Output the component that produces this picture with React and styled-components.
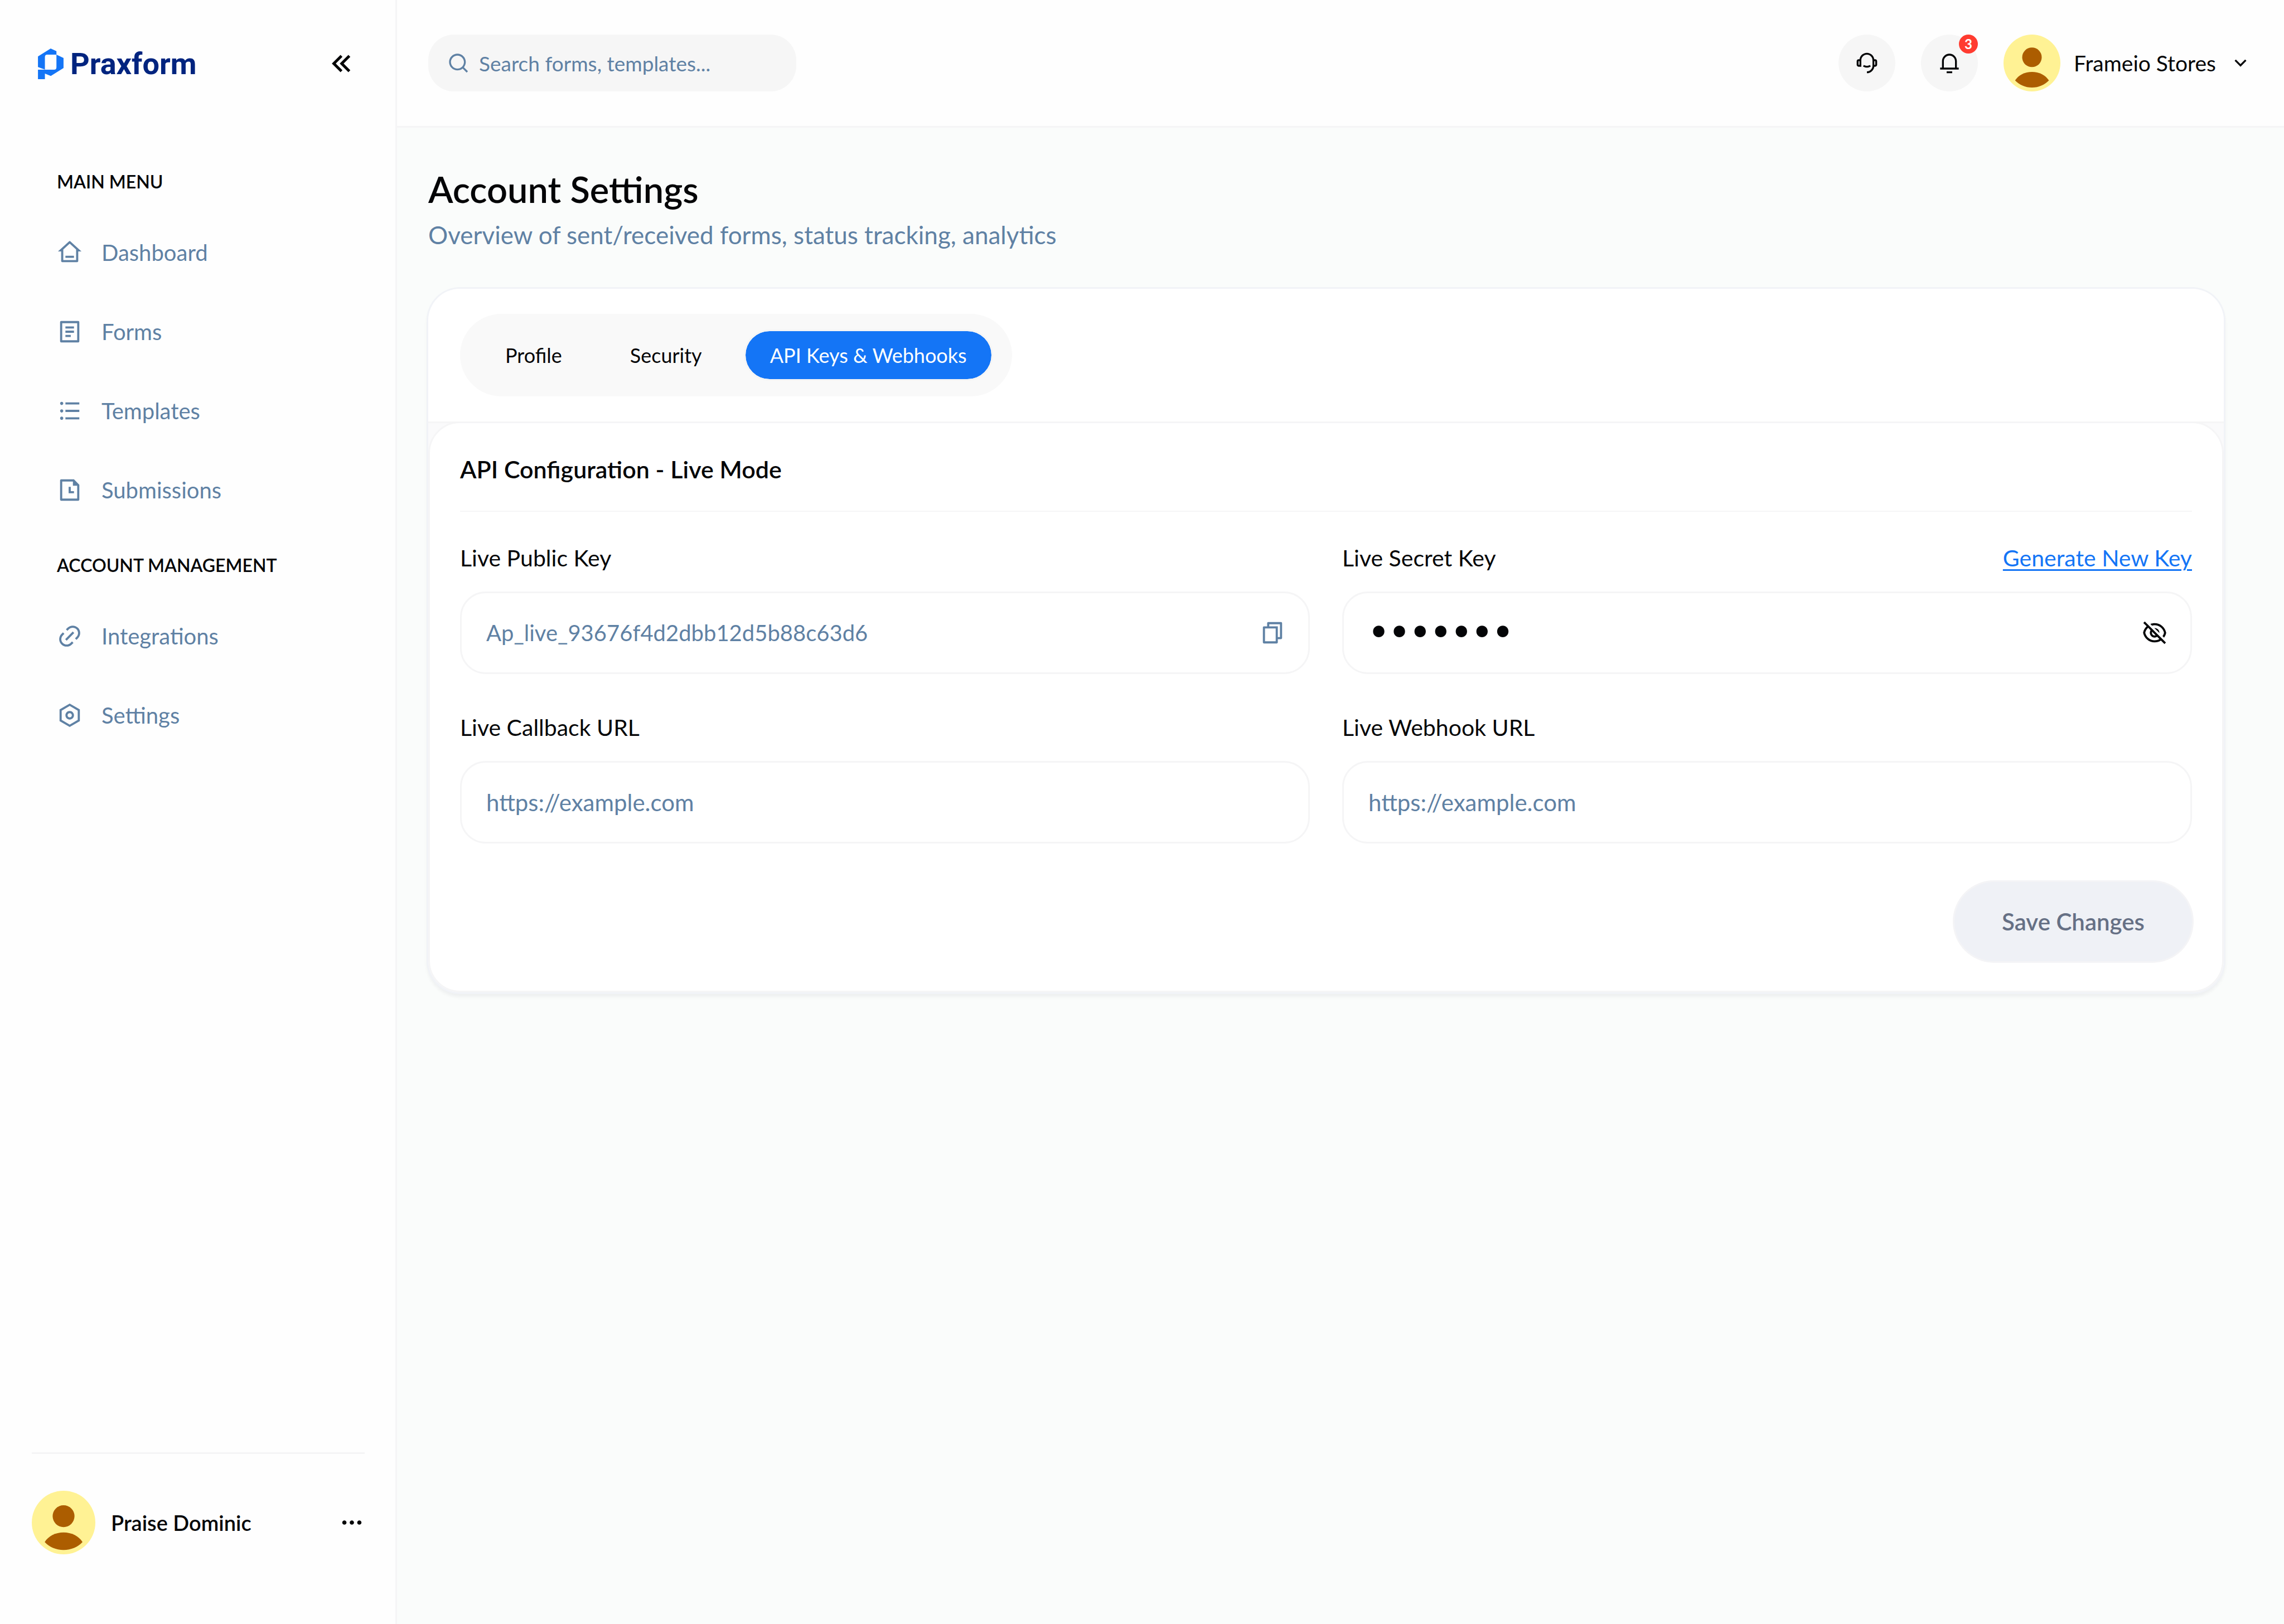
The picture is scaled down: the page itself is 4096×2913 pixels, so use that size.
import React, { useState } from "react";
import styled, { createGlobalStyle } from "styled-components";
import {
  RiArrowDownSLine,
  RiArrowLeftDoubleLine,
  RiCustomerService2Line,
  RiEyeOffLine,
  RiFileCopyLine,
  RiFileHistoryLine,
  RiHome3Line,
  RiLink,
  RiListUnordered,
  RiMoreFill,
  RiNotification3Line,
  RiSearchLine,
  RiSettingsLine,
} from "react-icons/ri";

const color = {
  ink: "#040507",
  steel: "#5f81a4",
  blue: "#1475f6",
  navy: "#00247f",
  line: "#f5f5f6",
  page: "#fafcfb",
};

const GlobalStyle = createGlobalStyle`
  *, *::before, *::after { box-sizing: border-box; }
  body {
    margin: 0;
    background: ${color.page};
    color: ${color.ink};
    font-family: Lato, "Open Sans", sans-serif;
    font-size: 40px;
  }
  button, input { font: inherit; color: inherit; }
  button { border: 0; padding: 0; background: none; cursor: pointer; }
  h1, h2, h3, p, ul { margin: 0; padding: 0; }
  a { color: inherit; text-decoration: none; }
  svg { display: block; flex: none; }
`;

const Shell = styled.div`
  display: flex;
  min-height: 100vh;
`;

/* Sidebar */

const Sidebar = styled.aside`
  display: flex;
  flex-direction: column;
  flex: none;
  width: 712px;
  background: #fefefe;
  border-right: 3px solid ${color.line};
`;

const BrandRow = styled.div`
  display: flex;
  align-items: center;
  justify-content: space-between;
  height: 228px;
  padding: 0 66px 0 68px;
`;

const Brand = styled.a`
  display: flex;
  align-items: center;
  gap: 12px;
  color: ${color.navy};
  font-family: Roboto, sans-serif;
  font-size: 54px;
  font-weight: 700;
`;

const IconButton = styled.button`
  display: grid;
  place-items: center;
  flex: none;
`;

const Nav = styled.nav`
  flex: 1;
  padding: 34px 57px 0 102px;
`;

const NavHeading = styled.h2`
  padding: 42px 0 34px;
  font-size: 32px;
  line-height: 44px;
  font-weight: 600;
`;

const NavList = styled.ul`
  list-style: none;
`;

const NavLink = styled.a`
  display: flex;
  align-items: center;
  gap: 34px;
  height: 142px;
  color: ${color.steel};
`;

const Account = styled.div`
  display: flex;
  align-items: center;
  gap: 28px;
  margin: 0 55px 0 57px;
  padding: 66px 0 125px;
  border-top: 3px solid ${color.line};
`;

const AccountName = styled.span`
  flex: 1;
  font-size: 38px;
  font-weight: 600;
`;

/* Top bar */

const Column = styled.div`
  display: flex;
  flex-direction: column;
  flex: 1;
  min-width: 0;
`;

const TopBar = styled.header`
  display: flex;
  align-items: center;
  justify-content: space-between;
  height: 229px;
  padding: 0 58px 0 56px;
  background: #fefefe;
  border-bottom: 3px solid ${color.line};
`;

const SearchBox = styled.label`
  display: flex;
  align-items: center;
  gap: 17px;
  width: 660px;
  height: 102px;
  padding: 0 34px;
  border-radius: 46px;
  background: #f6f6f6;
  color: ${color.steel};
  font-size: 37px;
`;

const TextInput = styled.input`
  flex: 1;
  min-width: 0;
  height: 100%;
  padding: 0;
  border: 0;
  outline: 0;
  background: none;
  &::placeholder { color: ${color.steel}; opacity: 1; }
`;

const Actions = styled.div`
  display: flex;
  align-items: center;
  gap: 46px;
`;

const RoundButton = styled(IconButton)`
  position: relative;
  width: 102px;
  height: 102px;
  border-radius: 50%;
  background: #f6f6f6;
`;

const Badge = styled.span`
  position: absolute;
  top: 0;
  right: 0;
  width: 34px;
  height: 34px;
  border-radius: 50%;
  background: #ff3b30;
  color: #fff;
  font-size: 24px;
  line-height: 34px;
  font-weight: 700;
  text-align: center;
`;

const StoreButton = styled.button`
  display: flex;
  align-items: center;
  gap: 24px;
  font-size: 39px;
`;

/* Page */

const Page = styled.main`
  flex: 1;
  padding: 70px 108px 70px 56px;
`;

const Title = styled.h1`
  font-size: 65px;
  line-height: 80px;
  font-weight: 600;
`;

const Subtitle = styled.p`
  margin-top: 12px;
  color: ${color.steel};
  font-size: 44px;
  line-height: 60px;
`;

const Card = styled.section`
  margin-top: 67px;
  border-radius: 57px;
  overflow: hidden;
  background: #fafafb;
  box-shadow: 0 0 0 3px #f1f3f7, 0 6px 6px 2px rgba(16, 24, 40, 0.05);
`;

const CardHeader = styled.div`
  padding: 45px 57px;
  background: #fff;
  border-bottom: 3px solid ${color.line};
`;

const Tabs = styled.div`
  display: inline-flex;
  align-items: center;
  gap: 28px;
  height: 148px;
  padding: 0 34px;
  border-radius: 74px;
  background: #f9f9f9;
  vertical-align: top;
`;

const Tab = styled.button`
  height: 92px;
  padding: 0 44px;
  border: 3px solid ${(p) => (p.$active ? "#f5f5f5" : "transparent")};
  border-radius: 46px;
  background: ${(p) => (p.$active ? color.blue : "transparent")};
  background-clip: padding-box;
  color: ${(p) => (p.$active ? "#fff" : color.ink)};
  font-size: 36px;
`;

const Panel = styled.form`
  position: relative;
  margin-top: -3px;
  padding: 53px 54px;
  border: 3px solid ${color.line};
  border-radius: 57px;
  background: #fff;
`;

const PanelTitle = styled.h3`
  padding-bottom: 44px;
  border-bottom: 2px solid ${color.line};
  font-size: 43px;
  line-height: 60px;
  font-weight: 600;
`;

const FieldGrid = styled.div`
  display: grid;
  grid-template-columns: 1fr 1fr;
  gap: 71px 58px;
  margin-top: 58px;
`;

const FieldHead = styled.div`
  display: flex;
  justify-content: space-between;
  margin-bottom: 35px;
  font-size: 41px;
  line-height: 50px;
`;

const KeyLink = styled.a`
  color: ${color.blue};
  text-decoration: underline;
  text-decoration-thickness: 3px;
  text-underline-offset: 5px;
`;

const FieldBox = styled.div`
  display: flex;
  align-items: center;
  gap: 28px;
  height: 148px;
  padding: 0 41px 0 44px;
  border: 3px solid ${color.line};
  border-radius: 46px;
  color: ${(p) => (p.$strong ? color.ink : color.steel)};
`;

const SecretInput = styled(TextInput)`
  font-family: "DejaVu Sans", sans-serif;
  font-size: 58px;
  font-weight: 700;
`;

const UrlInput = styled(TextInput)`
  font-size: 42px;
`;

const FormActions = styled.div`
  display: flex;
  justify-content: flex-end;
  margin-top: 69px;
`;

const SaveButton = styled.button`
  width: 426px;
  height: 142px;
  border-radius: 71px;
  background: #eff1f6;
  box-shadow: 0 0 0 3px #f4f4f6;
  color: #667085;
  font-size: 42px;
  font-weight: 600;
`;

function LogoMark() {
  return (
    <svg width="46" height="55" viewBox="48 63 195 234" fill={color.blue} aria-hidden="true">
      <path d="M145 63 189 83V110H119Q101 110 101 128V224L48 204V124Z" />
      <path d="M189 110 243 135V212L146 273 101 254V297H48V225H171Q189 225 189 207Z" />
    </svg>
  );
}

function Avatar({ size }) {
  return (
    <svg width={size} height={size} viewBox="0 0 160 160" aria-hidden="true">
      <circle cx="80" cy="80" r="80" fill="#fff294" />
      <g fill="#ac5d00">
        <circle cx="80" cy="64" r="27.5" />
        <path d="M32.5 129C42 114 60 105 80 105S118 114 127.7 129C116 141.5 99 149 80 149S44 141.5 32.5 129Z" />
      </g>
    </svg>
  );
}

function FormIcon({ size }) {
  return (
    <svg width={size} height={size} viewBox="0 0 24 24" fill="none" stroke="currentColor" strokeWidth="2" aria-hidden="true">
      <path d="M4 3H20V21H4Z" strokeLinejoin="round" />
      <path d="M8 8H16M8 12H16M8 16H13" />
    </svg>
  );
}

const menu = [
  {
    heading: "MAIN MENU",
    items: [
      ["Dashboard", RiHome3Line],
      ["Forms", FormIcon],
      ["Templates", RiListUnordered],
      ["Submissions", RiFileHistoryLine],
    ],
  },
  {
    heading: "ACCOUNT MANAGEMENT",
    items: [
      ["Integrations", RiLink],
      ["Settings", RiSettingsLine],
    ],
  },
];

const tabs = ["Profile", "Security", "API Keys & Webhooks"];

function Field({ id, label, link, strong, action, children }) {
  return (
    <div>
      <FieldHead>
        <label htmlFor={id}>{label}</label>
        {link && <KeyLink href="#generate">{link}</KeyLink>}
      </FieldHead>
      <FieldBox $strong={strong}>
        {children}
        {action}
      </FieldBox>
    </div>
  );
}

export default function App() {
  const [active, setActive] = useState(tabs[2]);
  return (
    <Shell>
      <GlobalStyle />
      <Sidebar>
        <BrandRow>
          <Brand href="#home">
            <LogoMark />
            Praxform
          </Brand>
          <IconButton type="button" aria-label="Collapse sidebar">
            <RiArrowLeftDoubleLine size={60} />
          </IconButton>
        </BrandRow>
        <Nav>
          {menu.map(({ heading, items }) => (
            <React.Fragment key={heading}>
              <NavHeading>{heading}</NavHeading>
              <NavList>
                {items.map(([name, Icon]) => (
                  <li key={name}>
                    <NavLink href={"#" + name.toLowerCase()}>
                      <Icon size={46} />
                      {name}
                    </NavLink>
                  </li>
                ))}
              </NavList>
            </React.Fragment>
          ))}
        </Nav>
        <Account>
          <Avatar size={114} />
          <AccountName>Praise Dominic</AccountName>
          <IconButton type="button" aria-label="Account options">
            <RiMoreFill size={46} />
          </IconButton>
        </Account>
      </Sidebar>

      <Column>
        <TopBar>
          <SearchBox>
            <RiSearchLine size={40} />
            <TextInput type="search" placeholder="Search forms, templates..." aria-label="Search" />
          </SearchBox>
          <Actions>
            <RoundButton type="button" aria-label="Support">
              <RiCustomerService2Line size={40} />
            </RoundButton>
            <RoundButton type="button" aria-label="Notifications">
              <RiNotification3Line size={40} />
              <Badge>3</Badge>
            </RoundButton>
            <StoreButton type="button">
              <Avatar size={102} />
              Frameio Stores
              <RiArrowDownSLine size={40} />
            </StoreButton>
          </Actions>
        </TopBar>

        <Page>
          <Title>Account Settings</Title>
          <Subtitle>Overview of sent/received forms, status tracking, analytics</Subtitle>
          <Card>
            <CardHeader>
              <Tabs role="tablist">
                {tabs.map((name) => (
                  <Tab
                    key={name}
                    type="button"
                    role="tab"
                    aria-selected={name === active}
                    $active={name === active}
                    onClick={() => setActive(name)}
                  >
                    {name}
                  </Tab>
                ))}
              </Tabs>
            </CardHeader>
            <Panel onSubmit={(e) => e.preventDefault()}>
              <PanelTitle>API Configuration - Live Mode</PanelTitle>
              <FieldGrid>
                <Field
                  id="public-key"
                  label="Live Public Key"
                  action={
                    <IconButton type="button" aria-label="Copy key">
                      <RiFileCopyLine size={46} />
                    </IconButton>
                  }
                >
                  <TextInput id="public-key" readOnly value="Ap_live_93676f4d2dbb12d5b88c63d6" />
                </Field>
                <Field
                  id="secret-key"
                  label="Live Secret Key"
                  link="Generate New Key"
                  strong
                  action={
                    <IconButton type="button" aria-label="Show key">
                      <RiEyeOffLine size={46} />
                    </IconButton>
                  }
                >
                  <SecretInput id="secret-key" type="password" defaultValue="sk_live" />
                </Field>
                <Field id="callback-url" label="Live Callback URL">
                  <UrlInput id="callback-url" type="url" placeholder="https://example.com" />
                </Field>
                <Field id="webhook-url" label="Live Webhook URL">
                  <UrlInput id="webhook-url" type="url" placeholder="https://example.com" />
                </Field>
              </FieldGrid>
              <FormActions>
                <SaveButton type="submit">Save Changes</SaveButton>
              </FormActions>
            </Panel>
          </Card>
        </Page>
      </Column>
    </Shell>
  );
}
